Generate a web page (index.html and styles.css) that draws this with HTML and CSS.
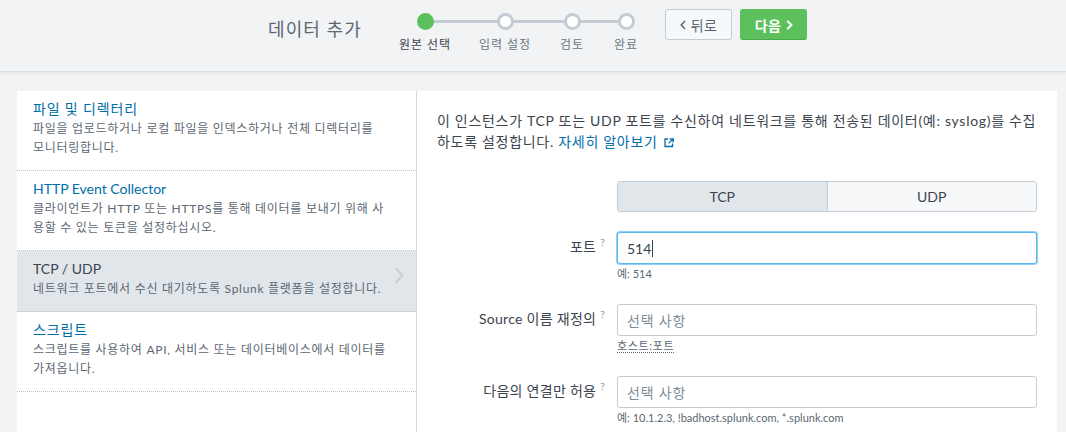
FILE: index.html
```html
<!DOCTYPE html>
<html lang="ko">
<head>
<meta charset="utf-8">
<title>데이터 추가</title>
<link rel="stylesheet" href="styles.css">
</head>
<body>
<header class="topbar">
  <h1 class="title">데이터 추가</h1>
  <ol class="steps">
    <li class="step is-current"><span class="dot"></span><span class="step-label">원본 선택</span></li>
    <li class="step"><span class="dot"></span><span class="step-label">입력 설정</span></li>
    <li class="step"><span class="dot"></span><span class="step-label">검토</span></li>
    <li class="step"><span class="dot"></span><span class="step-label">완료</span></li>
  </ol>
  <div class="actions">
    <button class="btn btn-back" type="button"><svg class="chev" width="6" height="10" viewBox="0 0 6 10"><polyline points="5,1 1.2,5 5,9" fill="none" stroke="#5c6773" stroke-width="1.5"/></svg>뒤로</button>
    <button class="btn btn-next" type="button">다음<svg class="chev" width="7" height="10" viewBox="0 0 7 10"><polyline points="1.3,1 5.5,5 1.3,9" fill="none" stroke="#ffffff" stroke-width="2"/></svg></button>
  </div>
</header>
<main class="layout">
  <nav class="sources">
    <a class="source" href="#">
      <div class="source-text">
        <div class="source-title">파일 및 디렉터리</div>
        <div class="source-desc">파일을 업로드하거나 로컬 파일을 인덱스하거나 전체 디렉터리를 모니터링합니다.</div>
      </div>
    </a>
    <a class="source" href="#">
      <div class="source-text">
        <div class="source-title is-latin">HTTP Event Collector</div>
        <div class="source-desc">클라이언트가 HTTP 또는 HTTPS를 통해 데이터를 보내기 위해 사용할 수 있는 토큰을 설정하십시오.</div>
      </div>
    </a>
    <a class="source is-selected" href="#">
      <div class="source-text">
        <div class="source-title is-latin">TCP / UDP</div>
        <div class="source-desc">네트워크 포트에서 수신 대기하도록 Splunk 플랫폼을 설정합니다.</div>
      </div>
      <svg class="source-chev" width="10" height="17" viewBox="0 0 10 17"><polyline points="1.5,1 8.2,8.5 1.5,16" fill="none" stroke="#c8d0d8" stroke-width="2.4"/></svg>
    </a>
    <a class="source" href="#">
      <div class="source-text">
        <div class="source-title">스크립트</div>
        <div class="source-desc">스크립트를 사용하여 API, 서비스 또는 데이터베이스에서 데이터를 가져옵니다.</div>
      </div>
    </a>
  </nav>
  <section class="config">
    <p class="intro">이 인스턴스가 TCP 또는 UDP 포트를 수신하여 네트워크를 통해 전송된 데이터(예: syslog)를 수집하도록 설정합니다. <a class="link" href="#">자세히 알아보기<svg class="ext" width="10" height="10" viewBox="0 0 10 10"><path d="M8.5 5.5v3h-7.5v-7.5h3M5.5 0.8h3.7v3.7M9.2 0.8 4.6 5.4" fill="none" stroke="#006eaa" stroke-width="1.3"/></svg></a></p>
    <div class="form">
      <div class="row row-toggle">
        <span></span>
        <div class="toggle">
          <button class="toggle-opt is-on" type="button">TCP</button>
          <button class="toggle-opt" type="button">UDP</button>
        </div>
      </div>
      <div class="row">
        <label class="label">포트<sup>?</sup></label>
        <div class="control">
          <div class="input is-focus"><span class="value">514</span><span class="caret"></span></div>
          <div class="help">예: 514</div>
        </div>
      </div>
      <div class="row">
        <label class="label">Source 이름 재정의<sup>?</sup></label>
        <div class="control">
          <div class="input"><span class="placeholder">선택 사항</span></div>
          <div class="help"><span class="dotted">호스트:포트</span></div>
        </div>
      </div>
      <div class="row">
        <label class="label">다음의 연결만 허용<sup>?</sup></label>
        <div class="control">
          <div class="input"><span class="placeholder">선택 사항</span></div>
          <div class="help">예: 10.1.2.3, !badhost.splunk.com, *.splunk.com</div>
        </div>
      </div>
    </div>
  </section>
</main>
</body>
</html>
```
FILE: styles.css
```css
* { box-sizing: border-box; }
html, body { margin: 0; padding: 0; }
body {
  background: #f2f3f5;
  font-family: Lato, "Noto Sans CJK KR", sans-serif;
  color: #3c444d;
  height: 432px;
  overflow: hidden;
}

.topbar {
  height: 72px;
  display: flex;
  align-items: flex-start;
  padding-left: 268px;
  background: #f2f3f5;
  border-bottom: 1px solid #dcdfe3;
  box-shadow: 0 1px 3px rgba(0, 0, 0, 0.07);
  position: relative;
}
.title {
  margin: 17px 0 0;
  width: 117px;
  font-size: 18px;
  line-height: 24px;
  font-weight: normal;
  letter-spacing: 0.06em;
  color: #5c6773;
}
.steps {
  list-style: none;
  margin: 0;
  padding: 0;
  display: flex;
  position: relative;
}
.steps::before {
  content: "";
  position: absolute;
  top: 20px;
  left: 40px;
  right: 28px;
  height: 3px;
  background: #c3cbd4;
}
.step {
  display: flex;
  flex-direction: column;
  align-items: center;
  padding: 13px 14px 0;
}
.step:nth-child(n+3) { padding: 13px 15px 0; }
.dot {
  position: relative;
  width: 17px;
  height: 17px;
  border-radius: 50%;
  background: #fff;
  border: 3px solid #c3cbd4;
}
.step.is-current .dot {
  background: #5cc05c;
  border-color: #5cc05c;
}
.step-label {
  margin-top: 6px;
  font-size: 12px;
  line-height: 18px;
  letter-spacing: 0.08em;
  color: #6b7785;
  white-space: nowrap;
}
.step.is-current .step-label { color: #3c444d; }

.actions {
  display: flex;
  gap: 8px;
  margin-left: 12px;
  padding-top: 9px;
}
.btn {
  height: 31px;
  width: 67px;
  display: flex;
  align-items: center;
  justify-content: center;
  gap: 5px;
  border-radius: 3px;
  font-family: inherit;
  font-size: 14px;
  padding: 0;
  cursor: pointer;
  letter-spacing: 0.04em;
}
.btn-back {
  background: #f7f8fa;
  border: 1px solid #c3cbd4;
  color: #5c6773;
}
.btn-next {
  background: #5cc05c;
  border: 1px solid #5cc05c;
  border-bottom-color: #4aa94a;
  color: #fff;
  font-weight: bold;
  gap: 4px;
}

.layout {
  display: flex;
  height: calc(432px - 72px);
  padding: 19px 9px 0 17px;
}
.sources {
  width: 400px;
  flex: 0 0 400px;
  background: #fff;
  border-right: 1px solid #d5dade;
}
.source {
  display: flex;
  align-items: center;
  padding: 8px 8px 13px 16px;
  border-bottom: 1px dotted #b9c1ca;
  text-decoration: none;
}
.source.is-selected { background: #e1e6eb; }
.source-text { width: 355px; flex: 0 0 355px; }
.source-title {
  font-size: 14px;
  line-height: 20px;
  letter-spacing: 0.06em;
  color: #006eaa;
}
.source-title.is-latin { letter-spacing: 0; }
.source.is-selected .source-title { color: #3c444d; }
.source-desc {
  font-size: 12px;
  line-height: 19px;
  letter-spacing: 0.06em;
  color: #5c6773;
}
.source-chev { margin-left: auto; margin-right: 4px; margin-top: -6px; }

.config {
  flex: 1;
  background: #fff;
  padding: 19px 20px 0;
}
.intro {
  margin: 0 -4px 29px 0;
  font-size: 14px;
  line-height: 21px;
  letter-spacing: 0.05em;
  color: #3c444d;
}
.link { color: #006eaa; text-decoration: none; }
.ext { margin-left: 6px; vertical-align: -1px; }

.row {
  display: grid;
  grid-template-columns: 168px 420px;
  column-gap: 12px;
  margin-bottom: 22px;
}
.row-toggle { margin-bottom: 20px; }
.toggle {
  display: flex;
  height: 31px;
  border: 1px solid #c3cbd4;
  border-radius: 3px;
  overflow: hidden;
}
.toggle-opt {
  flex: 1;
  border: 0;
  background: #f7f8fa;
  font-family: inherit;
  font-size: 14px;
  color: #3c444d;
  padding: 0;
}
.toggle-opt.is-on {
  background: #e1e6eb;
  border-right: 1px solid #c3cbd4;
}
.label {
  text-align: right;
  font-size: 14px;
  line-height: 20px;
  padding-top: 5px;
  letter-spacing: 0.02em;
  color: #3c444d;
}
.label sup {
  font-size: 10px;
  line-height: 0;
  color: #818d99;
  margin-left: 4px;
  vertical-align: 6px;
}
.input {
  height: 32px;
  border: 1px solid #c3cbd4;
  border-radius: 3px;
  padding: 0 9px;
  display: flex;
  align-items: center;
  font-size: 14px;
  background: #fff;
}
.input.is-focus {
  border-color: #5cb6ef;
  box-shadow: 0 0 0 1px #8fd0f6;
}
.value { color: #3c444d; }
.caret {
  width: 1px;
  height: 17px;
  background: #3c444d;
  margin-left: 1px;
}
.placeholder { color: #7f8b98; letter-spacing: 0.06em; }
.help {
  margin-top: 2px;
  font-size: 11px;
  line-height: 16px;
  color: #5c6773;
}
.dotted { border-bottom: 1px dotted #5c6773; letter-spacing: 0.06em; }
```
